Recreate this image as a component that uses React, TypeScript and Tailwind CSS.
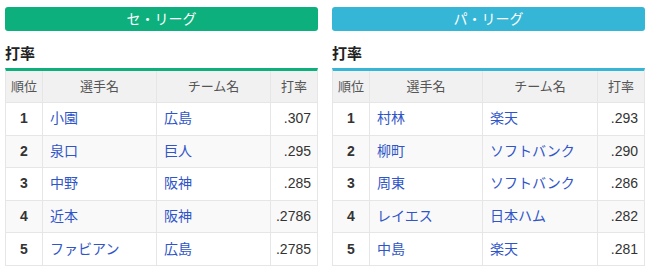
import React from "react";

type Row = { rank: number; name: string; team: string; avg: string };

const ce: Row[] = [
  { rank: 1, name: "小園", team: "広島", avg: ".307" },
  { rank: 2, name: "泉口", team: "巨人", avg: ".295" },
  { rank: 3, name: "中野", team: "阪神", avg: ".285" },
  { rank: 4, name: "近本", team: "阪神", avg: ".2786" },
  { rank: 5, name: "ファビアン", team: "広島", avg: ".2785" },
];

const pa: Row[] = [
  { rank: 1, name: "村林", team: "楽天", avg: ".293" },
  { rank: 2, name: "柳町", team: "ソフトバンク", avg: ".290" },
  { rank: 3, name: "周東", team: "ソフトバンク", avg: ".286" },
  { rank: 4, name: "レイエス", team: "日本ハム", avg: ".282" },
  { rank: 5, name: "中島", team: "楽天", avg: ".281" },
];

function Panel({
  title,
  rows,
  bar,
  border,
  cols,
}: {
  title: string;
  rows: Row[];
  bar: string;
  border: string;
  cols: string;
}) {
  return (
    <div className="flex flex-col w-[313px]">
      <div
        className={`${bar} h-[24px] rounded-[3px] flex items-center justify-center text-white text-[14px] mt-[7px]`}
      >
        {title}
      </div>
      <div className="text-[15px] font-bold text-[#222] mt-[12px] leading-[22px]">打率</div>
      <div className={`mt-[3px] border-t-[3px] ${border} border-l border-r border-[#e6e6e6]`}>
        <div className={`grid ${cols} bg-[#f1f1f1] h-[32px] text-[13px] text-[#555]`}>
          <div className="flex items-center justify-center border-r border-b border-[#e6e6e6]">順位</div>
          <div className="flex items-center justify-center border-r border-b border-[#e6e6e6]">選手名</div>
          <div className="flex items-center justify-center border-r border-b border-[#e6e6e6]">チーム名</div>
          <div className="flex items-center justify-center border-b border-[#e6e6e6]">打率</div>
        </div>
        {rows.map((r) => (
          <div
            key={r.rank}
            className={`grid ${cols} h-[32.6px] text-[14px] ${r.rank % 2 === 0 ? "bg-[#f9f9f9]" : "bg-white"}`}
          >
            <div className="flex items-center justify-center border-r border-b border-[#e6e6e6] font-bold text-[#333]">
              {r.rank}
            </div>
            <div className="flex items-center pl-[7px] border-r border-b border-[#e6e6e6] text-[#2f55c8]">
              {r.name}
            </div>
            <div className="flex items-center pl-[7px] border-r border-b border-[#e6e6e6] text-[#2f55c8]">
              {r.team}
            </div>
            <div className="flex items-center justify-end pr-[6px] border-b border-[#e6e6e6] text-[#333]">
              {r.avg}
            </div>
          </div>
        ))}
      </div>
    </div>
  );
}

export default function App() {
  return (
    <div
      className="w-[650px] h-[272px] bg-white flex gap-[14px] px-[5px] overflow-hidden"
      style={{ fontFamily: '"Liberation Sans", "Noto Sans CJK JP", sans-serif' }}
    >
      <Panel
        title="セ・リーグ"
        rows={ce}
        bar="bg-[#0db07d]"
        border="border-t-[#0db07d]"
        cols="grid-cols-[37px_114px_114px_1fr]"
      />
      <Panel
        title="パ・リーグ"
        rows={pa}
        bar="bg-[#35b6d6]"
        border="border-t-[#35b6d6]"
        cols="grid-cols-[37px_113px_115px_1fr]"
      />
    </div>
  );
}
